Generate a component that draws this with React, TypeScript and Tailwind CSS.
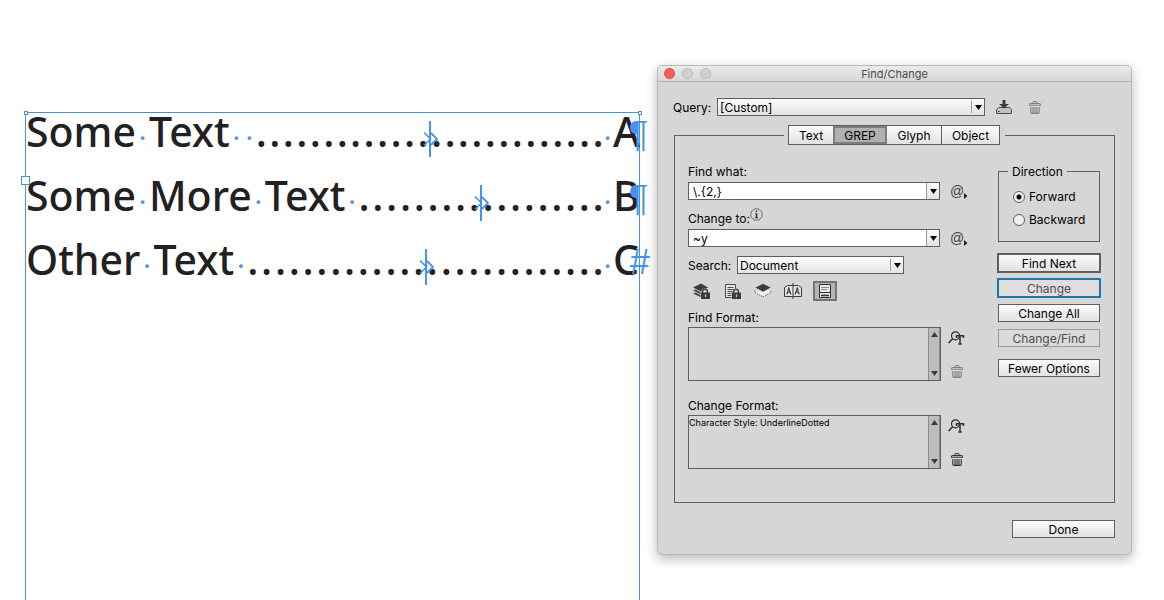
import React from 'react';

const BTN =
  'flex items-center justify-center pt-px text-[12px] leading-4 bg-linear-to-b from-[#fbfbfb] to-[#e2e2e2] text-black';

/* ---------- document marks ---------- */

function Space() {
  return <span className="w-[13px] shrink-0 text-center text-[26px] leading-9 text-[#4a95ea]">·</span>;
}

function TabMark() {
  return (
    <svg
      className="absolute left-1/2 top-[8px] -translate-x-1/2"
      width="16"
      height="37"
      viewBox="0 0 16 37"
      fill="none"
      stroke="#4593f0"
      strokeWidth="2"
      aria-hidden="true"
    >
      <path d="M8 0V36" />
      <path d="M2 11.5L8.5 18L2 24.5" strokeWidth="1.6" />
      <path d="M9 12L15 18L9 24" strokeWidth="1.8" />
    </svg>
  );
}

function Leader({ count }: { count: number }) {
  return (
    <span className="relative flex flex-1 justify-between">
      {Array.from({ length: count }, (_, i) => (
        <span key={i}>.</span>
      ))}
      <TabMark />
    </span>
  );
}

function Line({
  words,
  spacesAfter,
  dots,
  end,
  mark,
}: {
  words: string[];
  spacesAfter: number;
  dots: number;
  end: string;
  mark: string;
}) {
  return (
    <p className="relative flex h-9 items-baseline leading-9">
      {words.map((word, i) => (
        <React.Fragment key={i}>
          {i > 0 && <Space />}
          <span>{word}</span>
        </React.Fragment>
      ))}
      {Array.from({ length: spacesAfter }, (_, i) => (
        <Space key={i} />
      ))}
      <Leader count={dots} />
      <span className="w-[9px] shrink-0 text-[26px] leading-9 text-[#4a95ea]">·</span>
      <span className="w-[26px] shrink-0">{end}</span>
      {mark === '#' ? (
        <span className="absolute -right-[11px] top-0 font-['Inter',sans-serif] text-[34px] font-light italic leading-[42px] text-[#4593f0]">
          #
        </span>
      ) : (
        <span className="absolute -right-[9px] top-0 font-['Liberation_Sans',sans-serif] text-[36px] font-normal leading-[44px] text-[#4593f0]">
          ¶
        </span>
      )}
    </p>
  );
}

function TextFrame() {
  return (
    <section className="relative mt-28 min-w-0 flex-1 border-x border-t border-[#4c92d0] font-['Noto_Sans',sans-serif] text-[41px] font-medium text-[#222021]">
      <span className="absolute -left-[2px] -top-[2px] size-1 border border-[#4c92d0] bg-white" />
      <span className="absolute -right-[3px] -top-[2px] size-1 border border-[#4c92d0] bg-white" />
      <div className="flex flex-col gap-7">
        <Line words={['Some', 'Text']} spacesAfter={2} dots={26} end="A" mark="¶" />
        <Line words={['Some', 'More', 'Text']} spacesAfter={1} dots={18} end="B" mark="¶" />
        <Line words={['Other', 'Text']} spacesAfter={1} dots={26} end="C" mark="#" />
      </div>
      <span className="absolute -left-[5px] top-[63px] size-[9px] border border-[#4c92d0] bg-white" />
    </section>
  );
}

/* ---------- icons ---------- */

function Trash({ color }: { color: string }) {
  return (
    <svg width="12" height="13" viewBox="0 0 12 13" fill="none" stroke={color} aria-hidden="true">
      <path d="M4 2.5V1.2Q4 .5 4.7 .5H7.3Q8 .5 8 1.2V2.5" />
      <path d="M.5 4.5V3.2Q.5 2.5 1.2 2.5H10.8Q11.5 2.5 11.5 3.2V4.5" />
      <path d="M0 4.2H12" />
      <path d="M1.8 6V11.2Q1.8 12.4 2.8 12.4H9.2Q10.2 12.4 10.2 11.2V6M4 6V12M6 6V12M8 6V12" strokeWidth="1.1" />
    </svg>
  );
}

function SaveQuery() {
  return (
    <svg width="16" height="15" viewBox="0 0 16 15" aria-hidden="true">
      <path d="M.5 13.5V9.5L2.5 7.5H13.5L15.500 9.5V13.5Z" fill="#c2c2c2" stroke="#4a4a4a" />
      <path d="M6.500 0H9.500V4H13L8 8.500L3 4H6.500Z" fill="#3c3c3c" />
      <path d="M2 11.500H3.500" stroke="#333" />
    </svg>
  );
}

function SpecialChars() {
  return (
    <span className="flex items-end font-['Liberation_Sans',sans-serif] text-[14px] leading-4 text-[#3f3f3f]">
      @
      <svg width="4" height="6" viewBox="0 0 4 6" className="shrink-0" aria-hidden="true">
        <path d="M0 0L3.500 3L0 6Z" fill="#222" />
      </svg>
    </span>
  );
}

function Info() {
  return (
    <svg width="13" height="13" viewBox="0 0 13 13" fill="none" className="mb-[6px]" aria-hidden="true">
      <circle cx="6.500" cy="6.500" r="5.800" stroke="#666" />
      <path d="M5.800 2.500H7.300V4H5.800ZM5 5.200H7.300V9.200H8.200V10.200H4.800V9.200H5.800V6.200H5Z" fill="#333" />
    </svg>
  );
}

function Lock() {
  return (
    <>
      <path d="M9 9.500V8.200Q9 5.800 12 5.800Q15 5.800 15 8.200V9.500H17V16H8V9.500Z" fill="#d6d6d6" stroke="#d6d6d6" />
      <path d="M9.700 10V8Q9.700 6.200 12 6.200Q14.300 6.200 14.300 8V10" fill="none" stroke="#3c3c3c" strokeWidth="1.400" />
      <path d="M8 9.500H17V16H8Z" fill="#3c3c3c" />
      <path d="M12.500 11.500V14" stroke="#ccc" strokeWidth="1.200" />
    </>
  );
}

function LockedLayers() {
  return (
    <svg width="18" height="16" viewBox="0 0 18 16" aria-hidden="true">
      <path d="M0 4.500L8 .5L15 4.500L8 8.500Z" fill="#3c3c3c" />
      <path d="M0 7.500L2.500 6.500L8 9.500V11.500Z" fill="#4a4a4a" />
      <path d="M0 10.500L2.500 9.500L8 12.300V14.300Z" fill="#4a4a4a" />
      <Lock />
    </svg>
  );
}

function LockedStories() {
  return (
    <svg width="18" height="16" viewBox="0 0 18 16" aria-hidden="true">
      <path d="M1.500 1.500H11.500V14.500H1.500Z" fill="#e4e4e4" stroke="#4a4a4a" />
      <path d="M3.500 4.500H9.500M3.500 6.500H9.500M3.500 8.500H9.500M3.500 10.500H9.500M3.500 12.500H8" stroke="#4a4a4a" />
      <Lock />
    </svg>
  );
}

function HiddenLayers() {
  return (
    <svg width="18" height="16" viewBox="0 0 18 16" aria-hidden="true">
      <path d="M1 7.500V9.500L9 14L17 9.500V7.500" fill="#eee" stroke="#333" strokeDasharray="1 1.300" />
      <path d="M1.500 4.500L9 .8L16.500 4.500L9 8.800Z" fill="#3c3c3c" />
    </svg>
  );
}

function MasterPages() {
  return (
    <svg width="18" height="16" viewBox="0 0 18 16" fill="none" stroke="#3c3c3c" aria-hidden="true">
      <path d="M.5 4.500L3.500 2.500H14.500L17.500 4.500V13.500H.5Z" fill="#e6e6e6" />
      <path d="M9 0V16" />
      <path d="M2.700 11.500L4.800 5L6.900 11.500M3.500 9.300H6.200M11.100 11.500L13.200 5L15.300 11.500M11.900 9.300H14.600" strokeWidth="1.100" />
    </svg>
  );
}

function Footnotes() {
  return (
    <svg width="12" height="14" viewBox="0 0 12 14" fill="none" stroke="#333" aria-hidden="true">
      <path d="M.5 .5H11.500V13.500H.5Z" fill="#e8e8e8" />
      <path d="M2 3.500H10M2 5.500H8" stroke="#888" />
      <path d="M1 8.500H11" />
      <path d="M2 11.500H10" strokeWidth="1.600" />
    </svg>
  );
}

function FormatPicker() {
  return (
    <svg width="17" height="14" viewBox="0 0 17 14" fill="none" stroke="#2e2e2e" aria-hidden="true">
      <circle cx="7.500" cy="4.800" r="4" strokeWidth="1.200" />
      <path d="M4.600 7.800L.6 12" strokeWidth="1.500" />
      <path d="M8.500 7V4.700H15.500V7M12 4.700V13M10.300 13H13.700" strokeWidth="1.500" />
    </svg>
  );
}

function Caret() {
  return (
    <svg width="7" height="5" viewBox="0 0 7 5" aria-hidden="true">
      <path d="M0 0H7L3.500 5Z" fill="#000" />
    </svg>
  );
}

/* ---------- controls ---------- */

function Select({ id, value, className }: { id: string; value: string; className: string }) {
  return (
    <span className={`relative flex ${className}`}>
      <select
        id={id}
        defaultValue={value}
        className="h-[18px] w-full appearance-none border border-[#5f5f5f] bg-linear-to-b from-[#fbfbfb] to-[#e4e4e4] px-[2px] pt-px text-[12px] leading-4 text-black"
      >
        <option>{value}</option>
      </select>
      <span className="pointer-events-none absolute inset-y-[3px] right-[3px] flex w-[11px] items-center justify-end border-l border-[#9a9a9a]">
        <Caret />
      </span>
    </span>
  );
}

function Combo({ id, value }: { id: string; value: string }) {
  return (
    <div className="flex items-center">
      <div className="flex h-[18px] w-[252px] border border-[#5f5f5f] bg-white">
        <input id={id} defaultValue={value} className="min-w-0 flex-1 px-1 pt-px text-[12px] leading-4 text-black" />
        <button
          type="button"
          aria-label="Recent entries"
          className="flex w-[13px] items-center justify-center border-l border-[#9a9a9a] bg-linear-to-b from-[#fbfbfb] to-[#e4e4e4]"
        >
          <Caret />
        </button>
      </div>
      <button type="button" aria-label="Special characters" className="ml-[10px]">
        <SpecialChars />
      </button>
    </div>
  );
}

function FormatBox({ text, color }: { text: string; color: string }) {
  return (
    <div className="mt-px flex">
      <div className="flex h-[54px] w-[253px] border border-[#5f5f5f]">
        <p className="min-w-0 flex-1 text-[9px] leading-[14px]">{text}</p>
        <div className="flex w-3 flex-col items-center justify-between border-x border-[#8c8c8c] bg-[#bdbdbd] py-1">
          <svg width="7" height="5" viewBox="0 0 7 5" aria-hidden="true">
            <path d="M0 5H7L3.500 0Z" fill="#3c3c3c" />
          </svg>
          <svg width="7" height="5" viewBox="0 0 7 5" aria-hidden="true">
            <path d="M0 0H7L3.500 5Z" fill="#3c3c3c" />
          </svg>
        </div>
      </div>
      <div className="ml-[7px] flex w-[17px] flex-col items-center justify-between pb-[3px] pt-1">
        <button type="button" aria-label="Specify attributes">
          <FormatPicker />
        </button>
        <button type="button" aria-label="Clear attributes">
          <Trash color={color} />
        </button>
      </div>
    </div>
  );
}

function Radio({ label, checked }: { label: string; checked?: boolean }) {
  return (
    <label className="flex items-center gap-1 leading-4">
      <input
        type="radio"
        name="direction"
        defaultChecked={checked}
        className="size-3 appearance-none rounded-full border border-[#5f5f5f] bg-[#f0f0f0] checked:bg-[radial-gradient(circle,#000_0,#000_2px,#f0f0f0_3px)]"
      />
      {label}
    </label>
  );
}

function Dialog() {
  return (
    <main className="mt-[65px] w-[475px] shrink-0 self-start rounded-[5px] border border-[#b9b9b9] bg-[#d6d6d6] font-['Inter',sans-serif] text-[12px] text-black shadow-[0_4px_12px_rgba(0,0,0,0.28)]">
      <header className="relative flex h-4 items-center justify-center rounded-t-[4px] border-b border-[#b4b4b4] bg-linear-to-b from-[#ebebeb] to-[#d6d6d6]">
        <div className="absolute left-[6px] flex gap-[7px]">
          <button type="button" aria-label="Close" className="size-[11px] rounded-full border border-[#e0443e] bg-[#fc5b57]" />
          <button type="button" aria-label="Minimize" className="size-[11px] rounded-full border border-[#b8b8b8] bg-[#d0d0d0]" />
          <button type="button" aria-label="Zoom" className="size-[11px] rounded-full border border-[#b8b8b8] bg-[#d0d0d0]" />
        </div>
        <h1 className="text-[11px] leading-4 text-[#4b4b4b]">Find/Change</h1>
      </header>

      <div className="px-4 pb-4 pt-4">
        <div className="flex items-center">
          <label htmlFor="query" className="-ml-px mr-px w-[43px] whitespace-nowrap pt-px leading-4">
            Query:
          </label>
          <Select id="query" value="[Custom]" className="w-[268px]" />
          <button type="button" aria-label="Save query" className="ml-[11px]">
            <SaveQuery />
          </button>
          <button type="button" aria-label="Delete query" className="ml-[17px]">
            <Trash color="#7d7d7d" />
          </button>
        </div>

        <fieldset className="mt-[9px] border border-[#5f5f5f] px-[13px] pb-[33px]">
          <legend className="mx-auto pl-1 pr-[5px]">
            <div className="flex h-5 border border-[#5f5f5f]" role="tablist">
              <button type="button" role="tab" className={`${BTN} w-[44px]`}>
                Text
              </button>
              <button
                type="button"
                role="tab"
                aria-selected="true"
                className="flex w-[54px] items-center justify-center border-2 border-[#7c7c7c] bg-[#b0b0b0] pt-px text-[12px] leading-4"
              >
                GREP
              </button>
              <button type="button" role="tab" className={`${BTN} w-[54px]`}>
                Glyph
              </button>
              <button type="button" role="tab" className={`${BTN} w-[58px] border-l border-[#5f5f5f]`}>
                Object
              </button>
            </div>
          </legend>

          <div className="flex justify-between">
            <div className="pt-[19px] leading-4">
              <label htmlFor="find" className="block">
                Find what:
              </label>
              <div className="mt-[2px]">
                <Combo id="find" value="\.{2,}" />
              </div>
              <div className="mt-[11px] flex h-4 items-end">
                <label htmlFor="change">Change to:</label>
                <Info />
              </div>
              <div className="mt-[2px]">
                <Combo id="change" value="~y" />
              </div>
              <div className="mt-[9px] flex items-center">
                <label htmlFor="search" className="w-[49px] pt-px">
                  Search:
                </label>
                <Select id="search" value="Document" className="w-[167px]" />
              </div>
              <div className="mt-[7px] flex h-5 items-center pl-[5px]">
                <button type="button" aria-label="Include locked layers">
                  <LockedLayers />
                </button>
                <button type="button" aria-label="Include locked stories" className="ml-[13px]">
                  <LockedStories />
                </button>
                <button type="button" aria-label="Include hidden layers" className="ml-3">
                  <HiddenLayers />
                </button>
                <button type="button" aria-label="Include master pages" className="ml-3">
                  <MasterPages />
                </button>
                <button
                  type="button"
                  aria-label="Include footnotes"
                  className="ml-[11px] flex h-5 w-6 items-center justify-center border-2 border-[#757575] bg-[#b4b4b4]"
                >
                  <Footnotes />
                </button>
              </div>
              <h2 className="mt-[9px]">Find Format:</h2>
              <FormatBox text="" color="#7d7d7d" />
              <h2 className="mt-[17px]">Change Format:</h2>
              <FormatBox text="Character Style: UnderlineDotted" color="#2e2e2e" />
            </div>

            <div className="flex w-[104px] flex-col pt-[18px]">
              <fieldset className="mx-px h-[79px] border border-[#5f5f5f] pl-[14px]">
                <legend className="-ml-[5px] px-1 leading-[17px]">Direction</legend>
                <div className="flex flex-col gap-[7px] pt-[9px]">
                  <Radio label="Forward" checked />
                  <Radio label="Backward" />
                </div>
              </fieldset>
              <button type="button" className={`${BTN} mt-[11px] h-5 border-2 border-[#5f5f5f]`}>
                Find Next
              </button>
              <button
                type="button"
                className="mt-[5px] flex h-5 items-center justify-center border-2 border-[#2277aa] bg-[#dedede] pt-px text-[12px] leading-4 text-[#4d4d4d]"
              >
                Change
              </button>
              <button type="button" className={`${BTN} mx-px mt-[6px] h-[18px] border border-[#5f5f5f]`}>
                Change All
              </button>
              <button
                type="button"
                className="mx-px mt-[7px] flex h-[18px] items-center justify-center border border-[#9a9a9a] bg-[#dadada] pt-px text-[12px] leading-4 text-[#4d4d4d]"
              >
                Change/Find
              </button>
              <button type="button" className={`${BTN} mx-px mt-3 h-[18px] border border-[#5f5f5f]`}>
                Fewer Options
              </button>
            </div>
          </div>
        </fieldset>

        <div className="mt-[17px] flex justify-end">
          <button type="button" className={`${BTN} h-[18px] w-[103px] border border-[#5f5f5f]`}>
            Done
          </button>
        </div>
      </div>
    </main>
  );
}

export default function App() {
  return (
    <div className="flex min-h-screen gap-[17px] bg-white pl-[25px] pr-8">
      <TextFrame />
      <Dialog />
    </div>
  );
}
